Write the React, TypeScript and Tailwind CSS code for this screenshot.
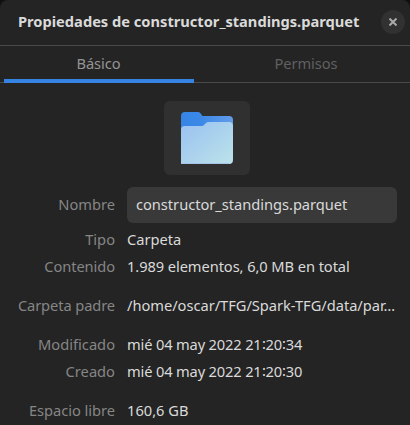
import type { ReactNode } from "react";

function Row({ label, children, className = "", labelClass = "", valueClass = "" }: { label: string; children: ReactNode; className?: string; labelClass?: string; valueClass?: string }) {
  return (
    <div className={`flex h-[21px] items-center gap-3 ${className}`}>
      <dt className={`w-[115px] shrink-0 whitespace-nowrap text-right text-[#868686] ${labelClass}`}>{label}</dt>
      <dd className={`w-[271px] whitespace-nowrap ${valueClass}`}>{children}</dd>
    </div>
  );
}

function FolderIcon() {
  return (
    <svg width="52" height="52" viewBox="0 0 52 52" aria-hidden="true">
      <defs>
        <linearGradient id="back" x1="0" y1="0" x2="1" y2="0">
          <stop offset="0" stopColor="#3584e4" />
          <stop offset="0.4" stopColor="#3c89e7" />
          <stop offset="1" stopColor="#639ce9" />
        </linearGradient>
        <linearGradient id="front" x1="0" y1="0" x2="1" y2="1">
          <stop offset="0" stopColor="#99c1f1" />
          <stop offset="1" stopColor="#bce3e9" />
        </linearGradient>
      </defs>
      <path d="M0 4Q0 0 4 0H17Q18.5 0 19.5 1.2L21.5 4H48Q52 4 52 8V30H0Z" fill="url(#back)" />
      <path d="M0 17.5Q0 14 3.5 14H21Q22.3 14 23 13L25 11Q26 10 27.5 10H48Q52 10 52 14V48Q52 52 48 52H0Z" fill="url(#front)" />
      <path d="M0 51.5H48" stroke="#a7c4e8" />
    </svg>
  );
}

export default function App() {
  return (
    <div className="h-[425px] w-[410px] overflow-hidden bg-[#101010] font-['Noto_Sans',sans-serif] text-[14.667px] leading-[21px] text-[#dadada]">
      <main className="h-full rounded-t-[8px] bg-[#242424]">
        <header className="flex h-[46px] items-center justify-between border-b border-[#4a4a4a] pl-[18px] pr-[5px]">
          <h1 className="whitespace-nowrap pb-[3px] font-bold tracking-[-0.01px]">Propiedades de constructor_standings.parquet</h1>
          <button aria-label="Cerrar" className="mb-px flex size-6 items-center justify-center rounded-full bg-[#313131]">
            <svg width="8" height="8" viewBox="0 0 8 8" stroke="#aaaaaa" strokeWidth="2">
              <path d="M0.5 0.5L7.5 7.5M7.5 0.5L0.5 7.5" />
            </svg>
          </button>
        </header>
        <nav className="flex h-[37px] border-b border-[#4a4a4a] pl-1 pr-[7px]">
          <button className="-mb-px w-[190px] border-b-4 border-[#3584e4] pr-px pt-px tracking-[-0.05px] text-[#949494]">Básico</button>
          <button className="ml-[18px] w-[190px] pb-[2px] pr-[2px] tracking-[-0.05px] text-[#606060]">Permisos</button>
        </nav>
        <div className="ml-[164px] mt-[18px] flex h-[74px] w-[86px] items-center justify-center rounded-[6px] bg-[#303030]">
          <FolderIcon />
        </div>
        <dl className="mt-3">
          <div className="flex items-center gap-3">
            <dt className="w-[115px] pb-[2px] text-right text-[#868686]">Nombre</dt>
            <dd className="flex h-9 w-[270px] items-center rounded-[6px] bg-[#393939] px-[9px] pb-[2px] tracking-[-0.03px]">
              constructor_standings.parquet
            </dd>
          </div>
          <Row label="Tipo" className="mt-[6px]" valueClass="tracking-[-0.03px]">Carpeta</Row>
          <Row label="Contenido" className="mt-[6px]" labelClass="tracking-[-0.08px]" valueClass="tracking-[-0.08px]">1.989 elementos, 6,0 MB en total</Row>
          <Row label="Carpeta padre" className="mt-[18px]" labelClass="tracking-[-0.1px]" valueClass="tracking-[-0.03px]">/home/oscar/TFG/Spark-TFG/data/par…</Row>
          <Row label="Modificado" className="mt-[18px]" valueClass="tracking-[-0.16px]">mié 04 may 2022 21∶20∶34</Row>
          <Row label="Creado" className="mt-[6px]" valueClass="tracking-[-0.16px]">mié 04 may 2022 21∶20∶30</Row>
          <Row label="Espacio libre" className="mt-[18px]" labelClass="tracking-[-0.04px]">160,6 GB</Row>
        </dl>
      </main>
    </div>
  );
}
